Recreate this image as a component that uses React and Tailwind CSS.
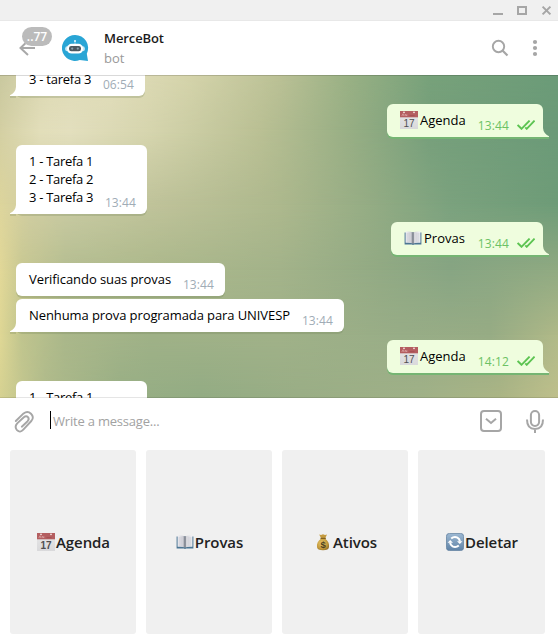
import React from "react";

function CalendarEmoji() {
  return (
    <svg width="18" height="18" viewBox="0 0 18 18" className="block shrink-0">
      <defs>
        <linearGradient id="calPage" x1="0" y1="0" x2="0" y2="1">
          <stop offset="0" stopColor="#e8e8e8" />
          <stop offset="1" stopColor="#d9d9db" />
        </linearGradient>
      </defs>
      <rect width="18" height="18" fill="url(#calPage)" />
      <rect width="18" height="6.3" fill="#b45e60" />
      <path d="M1.8 5L3 2.8L4 5M5.2 5V3.2L6.8 5V3.2" stroke="#dba5a4" strokeWidth="0.8" fill="none" />
      <circle cx="4" cy="1.3" r="0.9" fill="#f5e6e4" />
      <circle cx="14" cy="1.3" r="0.9" fill="#f5e6e4" />
      <path d="M9.5 4.7h5" stroke="#a04a4e" strokeWidth="0.8" />
      <text x="9" y="15.6" textAnchor="middle" fontFamily="Liberation Sans, Arial, sans-serif" fontSize="10" fill="#4f4f51">17</text>
    </svg>
  );
}

function BookEmoji() {
  return (
    <svg width="18" height="18" viewBox="0 0 18 18" className="block shrink-0">
      <defs>
        <linearGradient id="bookPage" x1="0" y1="0" x2="1" y2="0">
          <stop offset="0" stopColor="#f2f2f6" />
          <stop offset="0.35" stopColor="#cfcfd6" />
          <stop offset="0.5" stopColor="#8e929c" />
          <stop offset="0.6" stopColor="#d5d5da" />
          <stop offset="1" stopColor="#f2f2f6" />
        </linearGradient>
      </defs>
      <path d="M0.6 3.5H17.4V15.4H10.2L9 16L7.8 15.4H0.6Z" fill="#4b7593" />
      <path d="M1.6 2.6Q6 2 9 3.4Q12 2 16.4 2.6V13.8Q12 13.3 9 14.6Q6 13.3 1.6 13.8Z" fill="url(#bookPage)" />
      <path d="M9 3.4V14.6" stroke="#727985" strokeWidth="0.9" />
      <path d="M3.2 4v9M5 4v9M13 4v9M14.8 4v9" stroke="#c3c4ce" strokeWidth="0.6" />
    </svg>
  );
}

function MoneyEmoji() {
  return (
    <svg width="18" height="18" viewBox="0 0 18 18" className="block shrink-0">
      <defs>
        <radialGradient id="bag" cx="0.4" cy="0.4" r="0.7">
          <stop offset="0" stopColor="#e7c66a" />
          <stop offset="0.65" stopColor="#c39a3d" />
          <stop offset="1" stopColor="#8c6a25" />
        </radialGradient>
      </defs>
      <path d="M5.2 1.6L7 2.1L9 1.2L11 2.1L13 1.4L11.1 5.6H7.2Z" fill="#c49b40" />
      <path d="M7.2 5.4C3.7 7.8 2.6 11 3 14Q3.3 17.2 9 17.3Q14.7 17.2 15 14C15.4 11 14.4 7.8 11 5.4Z" fill="url(#bag)" />
      <path d="M6.5 5.4H11.8" stroke="#81601f" strokeWidth="1.2" />
      <text x="9" y="15.2" textAnchor="middle" fontFamily="Liberation Sans, Arial, sans-serif" fontWeight="700" fontSize="9.5" fill="#4c401f">$</text>
    </svg>
  );
}

function RefreshEmoji() {
  return (
    <svg width="18" height="18" viewBox="0 0 18 18" className="block shrink-0">
      <defs>
        <linearGradient id="refresh" x1="0" y1="0" x2="0" y2="1">
          <stop offset="0" stopColor="#9db9d3" />
          <stop offset="1" stopColor="#5f82a6" />
        </linearGradient>
      </defs>
      <rect x="0.4" y="0.4" width="17.2" height="17.2" rx="3" fill="url(#refresh)" stroke="#61809f" strokeWidth="0.8" />
      <path d="M5.2 5.6Q8 3.2 11.4 4.6Q13.6 5.8 13.9 8.4" stroke="#fff" strokeWidth="2" fill="none" />
      <path d="M11 8.2H16.4L13.8 11Z" fill="#fff" />
      <path d="M12.8 12.4Q10 14.8 6.6 13.4Q4.4 12.2 4.1 9.6" stroke="#fff" strokeWidth="2" fill="none" />
      <path d="M7 9.8H1.6L4.2 7Z" fill="#fff" />
    </svg>
  );
}

const emojis = {
  calendar: CalendarEmoji,
  book: BookEmoji,
  money: MoneyEmoji,
  refresh: RefreshEmoji,
};

function Checks() {
  return (
    <svg width="18" height="10" viewBox="0 0 18 10" className="block" fill="none" stroke="#5dc452" strokeWidth="1.9">
      <path d="M0.6 5L4.5 8.8L12.6 0.6" />
      <path d="M8.3 7.4L9.7 8.8L17.6 0.6" />
    </svg>
  );
}

function Incoming({ lines, time, tail, className }) {
  return (
    <div className={"relative shrink-0 self-start rounded-[6px] bg-white pt-[7px] pb-2 pl-[13px] shadow-[0_2px_0_rgba(110,125,85,0.24)] " + className}>
      {lines.map((line) => (
        <div key={line} className="text-[13px] leading-[18px] whitespace-nowrap text-black">{line}</div>
      ))}
      {time && <span className="absolute right-[11px] bottom-[3px] text-[12px] leading-4 tracking-[0.1px] text-[#a0acb6]">{time}</span>}
      {tail && (
        <svg width="12" height="12" viewBox="0 0 12 12" className="absolute -bottom-[2px] -left-[6px]">
          <path d="M0 10V12H6V10Z" fill="#6e7d55" fillOpacity="0.24" />
          <path d="M6 0V1Q5.6 6.5 0 9.3V10H12V0Z" fill="#fff" />
        </svg>
      )}
    </div>
  );
}

function Outgoing({ emoji, label, time, className }) {
  const Emoji = emojis[emoji];
  return (
    <div className={"relative mt-2 flex h-[33px] shrink-0 self-end rounded-[6px] bg-[#effdde] pt-[7px] pl-[13px] shadow-[0_2px_0_#75b573] " + className}>
      <Emoji />
      <span className="ml-[2px] text-[13px] leading-[18px] text-black">{label}</span>
      <span className="absolute right-[34px] bottom-[3px] text-[12px] leading-4 tracking-[0.15px] text-[#6cc264]">{time}</span>
      <span className="absolute right-2 bottom-[7px]"><Checks /></span>
      <svg width="12" height="12" viewBox="0 0 12 12" className="absolute -right-[6px] -bottom-[2px]">
        <path d="M0 10V12H12V10Z" fill="#75b573" />
        <path d="M6 0V1Q6.4 6.5 12 9.3V10H0V0Z" fill="#effdde" />
      </svg>
    </div>
  );
}

function TitleBar() {
  return (
    <div className="flex h-[21px] shrink-0 justify-end border-b border-[#e8e8e8] bg-[#f0f0f0]">
      <svg width="98" height="20" viewBox="0 0 98 20" fill="none" stroke="#a6a6a6" strokeWidth="2">
        <path d="M33 14H43" />
        <path d="M58 7H66V14H58Z" />
        <path d="M82.6 6.6L90.4 14.4M90.4 6.6L82.6 14.4" />
      </svg>
    </div>
  );
}

function Header() {
  return (
    <div className="flex h-[54px] shrink-0 items-start bg-white">
      <div className="relative h-[54px] w-[62px]">
        <svg width="20" height="20" viewBox="0 0 20 20" className="absolute top-[17px] left-[17px]" fill="none" stroke="#a8a8a8" strokeWidth="2">
          <path d="M18 10H3.5M11 2.8L3.5 10L11 17" />
        </svg>
        <span className="absolute top-[6px] left-[22px] flex h-[19px] w-[30px] items-center justify-center rounded-full bg-[#bbbbbb] text-[12px] font-semibold text-white">..77</span>
      </div>
      <svg width="27" height="27" viewBox="0 0 27 27" className="mt-[14px] block">
        <path d="M13 0A13 13 0 1 0 17.7 25.1L26 26L24.8 18.7A13 13 0 0 0 13 0Z" fill="#29a5d5" />
        <path d="M13 6V9" stroke="#a9ddf0" strokeWidth="0.8" />
        <circle cx="13" cy="6" r="1" fill="#e8f8fd" />
        <rect x="3.2" y="11.2" width="19.6" height="5" rx="2" fill="#c9e9f5" />
        <rect x="5" y="8.8" width="16" height="9.8" rx="4.7" fill="#fff" />
        <rect x="7" y="11" width="12" height="5.2" rx="2.2" fill="#4b5860" />
        <circle cx="10.2" cy="13.6" r="1.1" fill="#8ba0ab" />
        <circle cx="15.8" cy="13.6" r="1.1" fill="#8ba0ab" />
      </svg>
      <div className="mt-[7px] ml-[15px] flex-1 text-[13px] leading-5">
        <div className="font-semibold tracking-[-0.1px] text-[#1b1b1b]">MerceBot</div>
        <div className="text-[#999999]">bot</div>
      </div>
      <svg width="98" height="54" viewBox="0 0 98 54" className="block" fill="none">
        <circle cx="38.5" cy="25.5" r="5.7" stroke="#a6a6a6" strokeWidth="1.9" />
        <path d="M42.5 29.5L47.5 34.5" stroke="#a6a6a6" strokeWidth="2.2" />
        <circle cx="75" cy="21" r="2.1" fill="#a6a6a6" />
        <circle cx="75" cy="27" r="2.1" fill="#a6a6a6" />
        <circle cx="75" cy="33" r="2.1" fill="#a6a6a6" />
      </svg>
    </div>
  );
}

// Wallpaper: horizontal colour bands, each fading downwards into the next one.
function Wallpaper() {
  return (
    <div className="absolute inset-0 -z-10">
      <div className="absolute inset-0 bg-[linear-gradient(90deg,#d6d292_0px,#b0bb8b_45px,#98af85_120px,#93ac84_200px,#9aae86_300px,#a0b188_420px,#abb585_500px,#bfc08c_558px)]" />
      <div className="absolute inset-0 bg-[linear-gradient(90deg,#dfd795_0px,#bfc48e_22px,#aab78a_65px,#9fb187_150px,#a0b188_280px,#98ad87_400px,#97ac85_490px,#b0b988_558px)] [mask-image:linear-gradient(180deg,#000_260px,transparent_323px)]" />
      <div className="absolute inset-0 bg-[linear-gradient(90deg,#e2d898_0px,#c8c892_22px,#b5be91_65px,#adb98c_150px,#a3b38a_280px,#92aa84_380px,#87a583_450px,#90aa82_558px)] [mask-image:linear-gradient(180deg,#000_195px,transparent_260px)]" />
      <div className="absolute inset-0 bg-[linear-gradient(90deg,#ddd59c_0px,#d0cda2_30px,#c8caa2_75px,#bec299_160px,#adb88d_280px,#94ac84_370px,#7ba27e_450px,#6e9c78_558px)] [mask-image:linear-gradient(180deg,#000_130px,transparent_195px)]" />
      <div className="absolute inset-0 bg-[linear-gradient(90deg,#d3cfa3_0px,#e2deba_40px,#e3dfbe_70px,#d6d5ae_150px,#bac094_260px,#97ae84_350px,#769f7b_430px,#6b9a78_558px)] [mask-image:linear-gradient(180deg,#000_55px,transparent_130px)]" />
      <div className="absolute inset-0 bg-[linear-gradient(90deg,#c9c89f_0px,#ddd9b4_50px,#e1ddba_110px,#d4d3aa_190px,#bac095_280px,#98b084_350px,#77a17a_430px,#6b9b78_558px)] [mask-image:linear-gradient(180deg,#000_0px,transparent_55px)]" />
    </div>
  );
}

function Composer() {
  return (
    <div className="flex h-[52px] shrink-0 items-start bg-white">
      <svg width="50" height="52" viewBox="0 0 50 52" className="block" fill="none" stroke="#a6a6a6" strokeWidth="1.9" strokeLinecap="round" strokeLinejoin="round">
        <path d="M15.8 23L23.6 15.4Q27.6 12.4 31 15.7Q34.6 19.3 31.3 23L23.3 31.7Q20 35.2 17 32.2Q14.2 28.9 17.2 25.4L23.8 19.2Q26.2 17.4 28 19.2Q29.6 21.2 27.6 23.2L21.8 28.7" />
      </svg>
      <div className="mt-[13px] h-[18px] w-px bg-black" />
      <div className="mt-[14px] ml-[2px] flex-1 text-[13px] leading-[18px] tracking-[-0.2px] text-[#a2a2a2]">Write a message...</div>
      <svg width="98" height="52" viewBox="0 0 98 52" className="block" fill="none" stroke="#a6a6a6" strokeWidth="2">
        <rect x="21" y="13" width="20" height="20" rx="3" />
        <path d="M26 20.7L31 25L36 20.7" />
        <rect x="70.9" y="12.9" width="8.2" height="15" rx="4.1" />
        <path d="M67 21.5Q67 31 75 31Q83 31 83 21.5M75 31V35" />
      </svg>
    </div>
  );
}

const keys = [
  { emoji: "calendar", label: "Agenda" },
  { emoji: "book", label: "Provas" },
  { emoji: "money", label: "Ativos" },
  { emoji: "refresh", label: "Deletar" },
];

export default function App() {
  return (
    <div className="flex h-[640px] w-[558px] flex-col overflow-hidden bg-white font-['Open_Sans','Noto_Sans',sans-serif]">
      <TitleBar />
      <Header />
      <div className="relative isolate flex h-[323px] shrink-0 flex-col overflow-hidden pr-[15px] pl-4">
        <Wallpaper />
        <Incoming lines={["3 - tarefa 3"]} time="06:54" tail className="-mt-3 w-[129px] tracking-[-0.25px]" />
        <Outgoing emoji="calendar" label="Agenda" time="13:44" className="w-[156px]" />
        <Incoming lines={["1 - Tarefa 1", "2 - Tarefa 2", "3 - Tarefa 3"]} time="13:44" tail className="mt-2 w-[131px] tracking-[-0.3px]" />
        <Outgoing emoji="book" label="Provas" time="13:44" className="w-[152px]" />
        <Incoming lines={["Verificando suas provas"]} time="13:44" className="mt-2 w-[209px] tracking-[-0.08px]" />
        <Incoming lines={["Nenhuma prova programada para UNIVESP"]} time="13:44" tail className="mt-[3px] w-[328px] tracking-[-0.09px]" />
        <Outgoing emoji="calendar" label="Agenda" time="14:12" className="w-[156px]" />
        <Incoming lines={["1 - Tarefa 1"]} className="mt-2 w-[131px] tracking-[-0.3px]" />
        <div className="absolute inset-x-0 top-0 h-px bg-black/15" />
        <div className="absolute inset-x-0 bottom-0 h-px bg-black/10" />
      </div>
      <Composer />
      <div className="grid h-[184px] shrink-0 grid-cols-[126px_126px_126px_127px] gap-[10px] pl-[10px]">
        {keys.map(({ emoji, label }) => {
          const Emoji = emojis[emoji];
          return (
            <button key={label} className="flex items-center justify-center rounded-[3px] bg-[#f0f0f0] pl-px text-[15px] leading-5 font-semibold tracking-[-0.08px] text-[#222222]">
              <Emoji />
              <span className="ml-px">{label}</span>
            </button>
          );
        })}
      </div>
    </div>
  );
}
